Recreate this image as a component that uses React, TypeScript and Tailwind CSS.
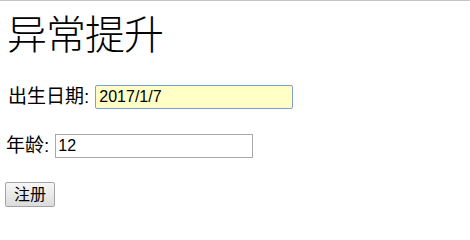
export default function App() {
  return (
    <div className="min-h-[230px] w-full bg-white border-t border-[#c4c4c4] text-black font-['Liberation_Sans','Noto_Sans_CJK_SC',sans-serif]">
      <div className="flex flex-col items-start px-[5px]">
        <h1 className="mt-[11px] ml-[2px] text-[40px] leading-[48px] font-light font-['Liberation_Serif','Noto_Sans_CJK_SC',serif] tracking-[-1px]">
          异常提升
        </h1>

        <div className="mt-[25px] flex items-center">
          <span className="ml-[3px] text-[19px] leading-[24px]">出生日期:</span>
          <input
            defaultValue="2017/1/7"
            className="ml-[6px] w-[198px] h-[24px] px-[3px] text-[16px] bg-[#ffffc6] border border-[#7d9ddb] rounded-[2px] outline-none font-['Liberation_Sans',sans-serif]"
          />
        </div>

        <div className="mt-[25px] flex items-center">
          <span className="ml-[1px] text-[19px] leading-[24px]">年龄:</span>
          <input
            defaultValue="12"
            className="ml-[6px] w-[198px] h-[24px] px-[2px] text-[16px] bg-white border border-[#a9a9a9] outline-none font-['Liberation_Sans',sans-serif]"
          />
        </div>

        <button className="mt-[24px] w-[50px] h-[25px] text-[16px] leading-none border border-[#a3a3a3] rounded-[2px] bg-gradient-to-b from-[#f7f7f7] to-[#dcdcdc]">
          注册
        </button>
      </div>
    </div>
  );
}
